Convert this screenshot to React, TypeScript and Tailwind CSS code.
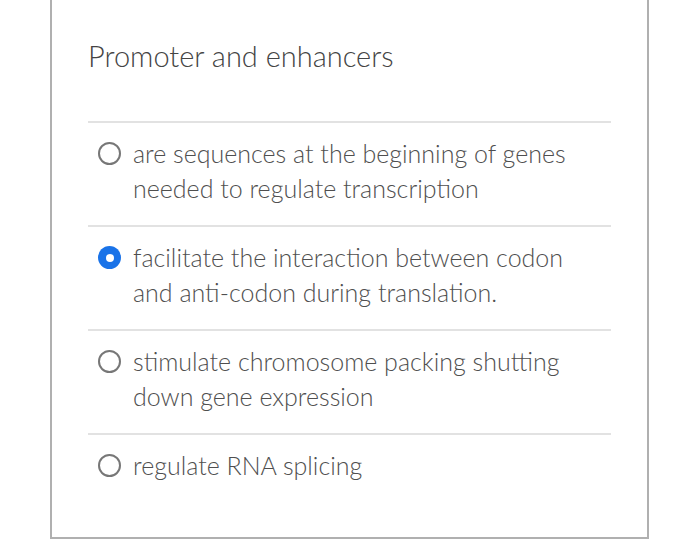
import { useState } from "react";

const options = [
  "are sequences at the beginning of genes needed to regulate transcription",
  "facilitate the interaction between codon and anti-codon during translation.",
  "stimulate chromosome packing shutting down gene expression",
  "regulate RNA splicing",
];

export default function App() {
  const [selected, setSelected] = useState(1);

  return (
    <div className="w-[700px] h-[545px] bg-white overflow-hidden font-['Lato','Liberation_Sans',sans-serif]">
      <div className="ml-[50px] mt-[-20px] w-[599px] h-[559px] border-2 border-[#b0b0b0] px-[36px]">
        <h1 className="pt-[52px] pb-[43px] text-[29px] leading-[44px] font-light text-[#444]">
          Promoter and enhancers
        </h1>
        {options.map((text, i) => (
          <Option
            key={i}
            text={text}
            checked={selected === i}
            onClick={() => setSelected(i)}
          />
        ))}
      </div>
    </div>
  );
}

function Option({
  text,
  checked,
  onClick,
}: {
  text: string;
  checked: boolean;
  onClick: () => void;
}) {
  return (
    <div
      onClick={onClick}
      className="flex gap-[12px] border-t-2 border-[#e2e2e2] pl-[10px] pr-[30px] pt-[13px] pb-[19px] cursor-pointer"
    >
      <div className="h-[35px] flex items-center shrink-0">
        {checked ? (
          <div className="w-[23px] h-[23px] rounded-full bg-[#1a73e8] flex items-center justify-center">
            <div className="w-[8px] h-[8px] rounded-full bg-white" />
          </div>
        ) : (
          <div className="w-[23px] h-[23px] rounded-full border-[2.5px] border-[#777]" />
        )}
      </div>
      <div className="text-[25px] leading-[35px] font-light text-[#4f4f4f]">{text}</div>
    </div>
  );
}
